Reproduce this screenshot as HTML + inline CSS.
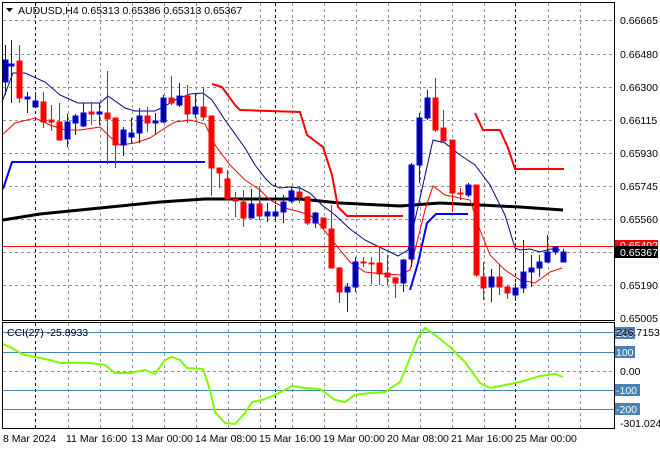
<!DOCTYPE html>
<html><head><meta charset="utf-8"><style>
html,body{margin:0;padding:0;background:#fff;}
svg{display:block;font-family:"Liberation Sans",sans-serif;font-size:10.5px;}
</style></head><body>
<svg width="660" height="450" viewBox="0 0 660 450" xmlns="http://www.w3.org/2000/svg">
<rect width="660" height="450" fill="#fff"/>
<g stroke="#8a939c" stroke-width="1" stroke-dasharray="3,3" fill="none">
<path d="M3 20.5H614M3 54.5H614M3 87.5H614M3 120.5H614M3 153.5H614M3 186.5H614M3 219.5H614M3 252.5H614M3 285.5H614"/>
<path d="M68.5 3V320M100.5 3V320M132.5 3V320M164.5 3V320M196.5 3V320M228.5 3V320M260.5 3V320M292.5 3V320M324.5 3V320M356.5 3V320M388.5 3V320M420.5 3V320M452.5 3V320M484.5 3V320M548.5 3V320M580.5 3V320"/>
<path d="M68.5 323V428M100.5 323V428M132.5 323V428M164.5 323V428M196.5 323V428M228.5 323V428M260.5 323V428M292.5 323V428M324.5 323V428M356.5 323V428M388.5 323V428M420.5 323V428M452.5 323V428M484.5 323V428M548.5 323V428M580.5 323V428"/>
<path d="M3 371.5H614"/>
</g>
<g stroke="#000" stroke-dasharray="3,3" fill="none">
<path d="M35.5 3V320M275.5 3V320M515.5 3V320M35.5 323V428M275.5 323V428M515.5 323V428"/>
</g>
<polyline fill="none" stroke="#000" stroke-width="3" points="3,220 40,214 80,210 120,206 160,202 205,199 300,199 340,203 400,206 440,203 480,205 520,207 563,210"/>
<polyline fill="none" stroke="#f00" stroke-width="2" points="212,84 222,87 235,105 240,110 300,112 307,135 323,147 332,175 338,207 347,216 403,216"/>
<polyline fill="none" stroke="#f00" stroke-width="2" points="475,113 483,130 500,130 508,148 515,169 564,169"/>
<polyline fill="none" stroke="#00f" stroke-width="2" points="3,189 12,162 205,162"/>
<polyline fill="none" stroke="#00f" stroke-width="2" points="410,290 418,263 427,223 436,214 468,214"/>
<polyline fill="none" stroke="#00008b" stroke-width="1" points="2,102 13,73 25,73 45,82 60,95 78,103 100,103 108,96 125,108 135,111 155,111 165,106 175,100 190,94 203,93 212,100 225,120 245,148 255,165 265,178 272,185 280,188 290,187 300,188 310,193 322,205 335,215 350,229 365,240 375,245 390,252 398,256 408,250 420,198 433,140 445,143 460,155 475,165 490,185 505,215 515,248 520,250 530,249 540,252 550,249 560,250"/>
<polyline fill="none" stroke="#f00" stroke-width="1" points="2,135 15,123 35,118 50,125 65,130 80,130 100,127 110,137 120,145 135,143 150,138 165,128 175,122 190,120 205,124 215,145 230,165 245,180 260,190 270,200 285,208 300,212 310,215 320,225 340,250 350,262 365,272 385,274 400,275 410,270 425,210 433,186 445,195 455,197 470,200 480,230 490,255 505,270 520,280 535,283 550,272 562,268"/>
<line x1="3" y1="246.5" x2="614" y2="246.5" stroke="#f00"/>
<line x1="3" y1="252.5" x2="614" y2="252.5" stroke="#8a939c" stroke-dasharray="3,3"/>
<g>
<path stroke="#00f" d="M5.5 45V95M11.5 40V103M27.5 92V113M35.5 92V108M67.5 114V147M75.5 114V135M83.5 103V127M99.5 103V125M123.5 127V156M131.5 118V143M139.5 108V143M155.5 113V134M163.5 95V123M179.5 83V107M195.5 93V118M251.5 189V218M267.5 203V222M275.5 205V222M283.5 195V223M291.5 187V203M315.5 212V228M347.5 283V312M355.5 257V292M403.5 259V292M411.5 163V267M419.5 113V183M427.5 90V120M468.5 183V197M491.5 269V302M515.5 283V301M523.5 240V293M531.5 255V287M539.5 255V277M547.5 235V263M555.5 246V255M563.5 249V262"/>
<path stroke="#f00" d="M19.5 45V103M43.5 92V128M51.5 105V131M59.5 103V140M91.5 102V125M107.5 71V164M115.5 118V168M147.5 107V132M171.5 76V105M187.5 85V123M203.5 87V120M211.5 116V196M219.5 168V188M227.5 170V199M235.5 192V217M243.5 190V227M259.5 186V220M299.5 186V203M307.5 196V225M323.5 218V230M331.5 205V268M339.5 267V303M363.5 257V267M371.5 257V284M379.5 246V285M387.5 255V285M395.5 277V298M435.5 78V132M443.5 110V143M452.5 140V212M460.5 188V200M476.5 185V277M483.5 262V300M499.5 264V295M507.5 285V299"/>
<g fill="#0000a0" stroke="#00f">
<rect x="3" y="60" width="5" height="22"/><rect x="9" y="64" width="5" height="2"/><rect x="25" y="97" width="5" height="2"/><rect x="33" y="101" width="5" height="6"/><rect x="65" y="122" width="5" height="17"/><rect x="73" y="116" width="5" height="7"/><rect x="81" y="113" width="5" height="13"/><rect x="97" y="112" width="5" height="2"/><rect x="121" y="130" width="5" height="15"/><rect x="129" y="133" width="5" height="4"/><rect x="137" y="116" width="5" height="17"/><rect x="153" y="121" width="5" height="2"/><rect x="161" y="98" width="5" height="24"/><rect x="177" y="96" width="5" height="9"/><rect x="193" y="107" width="5" height="7"/><rect x="249" y="204" width="5" height="14"/><rect x="265" y="212" width="5" height="4"/><rect x="273" y="212" width="5" height="4"/><rect x="281" y="202" width="5" height="10"/><rect x="289" y="191" width="5" height="10"/><rect x="313" y="213" width="5" height="10"/><rect x="345" y="287" width="5" height="5"/><rect x="353" y="262" width="5" height="25"/><rect x="401" y="260" width="5" height="23"/><rect x="409" y="165" width="5" height="94"/><rect x="417" y="118" width="5" height="47"/><rect x="425" y="98" width="5" height="20"/><rect x="466" y="185" width="5" height="10"/><rect x="489" y="277" width="5" height="10"/><rect x="513" y="288" width="5" height="7"/><rect x="521" y="272" width="5" height="16"/><rect x="529" y="268" width="5" height="4"/><rect x="537" y="262" width="5" height="6"/><rect x="545" y="252" width="5" height="10"/><rect x="553" y="247" width="5" height="5"/><rect x="561" y="252" width="5" height="10"/>
</g>
<g fill="#f00" stroke="#f00">
<rect x="17" y="61" width="5" height="37"/><rect x="41" y="102" width="5" height="20"/><rect x="49" y="120" width="5" height="2"/><rect x="57" y="122" width="5" height="18"/><rect x="89" y="112" width="5" height="2"/><rect x="105" y="113" width="5" height="6"/><rect x="113" y="118" width="5" height="27"/><rect x="145" y="116" width="5" height="7"/><rect x="169" y="98" width="5" height="5"/><rect x="185" y="96" width="5" height="18"/><rect x="201" y="107" width="5" height="10"/><rect x="209" y="116" width="5" height="52"/><rect x="217" y="168" width="5" height="5"/><rect x="225" y="179" width="5" height="20"/><rect x="233" y="199" width="5" height="2"/><rect x="241" y="202" width="5" height="16"/><rect x="257" y="204" width="5" height="12"/><rect x="297" y="192" width="5" height="5"/><rect x="305" y="197" width="5" height="26"/><rect x="321" y="218" width="5" height="10"/><rect x="329" y="229" width="5" height="39"/><rect x="337" y="268" width="5" height="24"/><rect x="361" y="262" width="5" height="1"/><rect x="369" y="263" width="5" height="1"/><rect x="377" y="263" width="5" height="11"/><rect x="385" y="273" width="5" height="4"/><rect x="393" y="278" width="5" height="5"/><rect x="433" y="98" width="5" height="32"/><rect x="441" y="128" width="5" height="13"/><rect x="450" y="140" width="5" height="53"/><rect x="458" y="193" width="5" height="1"/><rect x="474" y="185" width="5" height="90"/><rect x="481" y="277" width="5" height="11"/><rect x="497" y="277" width="5" height="10"/><rect x="505" y="287" width="5" height="6"/>
</g>
</g>
<rect x="2.5" y="2.5" width="612" height="318" fill="none" stroke="#000"/>
<rect x="2.5" y="322.5" width="612" height="106" fill="none" stroke="#000"/>
<g stroke="#4682b4"><path d="M3 332.5H614M3 352.5H614M3 390.5H614M3 409.5H614"/></g>
<polyline fill="none" stroke="#7cfc00" stroke-width="2" points="3,344 12,348 22,354 35,357 50,360 60,363 75,363 90,363 105,365 115,373 130,373 145,370 155,374 165,360 172,357 180,360 187,368 203,369 210,390 215,412 225,423 235,424 245,413 252,402 262,400 275,395 292,386 305,388 320,389 335,400 345,402 355,395 370,393 385,392 400,382 410,358 418,338 425,328 435,335 450,347 465,362 480,383 490,388 505,385 520,382 540,376 555,374 563,377"/>
<text x="7" y="336" fill="#000">CCI(27) -25.8933</text>
<path d="M6 8h7l-3.5 4z" fill="#000"/>
<text x="18" y="14" fill="#000">AUDUSD,H4  0.65313 0.65386 0.65313 0.65367</text>
<g fill="#000">
<text x="620" y="24">0.66665</text><text x="620" y="58">0.66480</text><text x="620" y="91">0.66300</text><text x="620" y="124">0.66115</text><text x="620" y="157">0.65930</text><text x="620" y="190">0.65745</text><text x="620" y="223">0.65560</text><text x="620" y="289">0.65190</text><text x="620" y="322">0.65005</text>
</g>
<rect x="615" y="240" width="43" height="11" fill="#f00"/><text x="620" y="249" fill="#fff">0.65402</text>
<rect x="615" y="246" width="43" height="12" fill="#000"/><text x="620" y="256" fill="#fff">0.65367</text>
<g fill="#fff">
<rect x="615" y="327" width="20" height="12" fill="#4682b4"/><rect x="615" y="346" width="20" height="12" fill="#4682b4"/><rect x="615" y="384" width="25" height="12" fill="#4682b4"/><rect x="615" y="403" width="25" height="12" fill="#4682b4"/>
<text x="616" y="337">200</text><text x="616" y="356">100</text><text x="616" y="394">-100</text><text x="616" y="413">-200</text>
</g>
<text x="616" y="336" fill="#000">246.7153</text>
<text x="620" y="375" fill="#000">0.00</text>
<text x="620" y="427" fill="#000">-301.0249</text>
<g fill="#000">
<text x="3" y="442">8 Mar 2024</text><text x="66" y="442">11 Mar 16:00</text><text x="131" y="442">13 Mar 00:00</text><text x="195" y="442">14 Mar 08:00</text><text x="259" y="442">15 Mar 16:00</text><text x="323" y="442">19 Mar 00:00</text><text x="387" y="442">20 Mar 08:00</text><text x="451" y="442">21 Mar 16:00</text><text x="515" y="442">25 Mar 00:00</text>
</g>
</svg>
</body></html>
